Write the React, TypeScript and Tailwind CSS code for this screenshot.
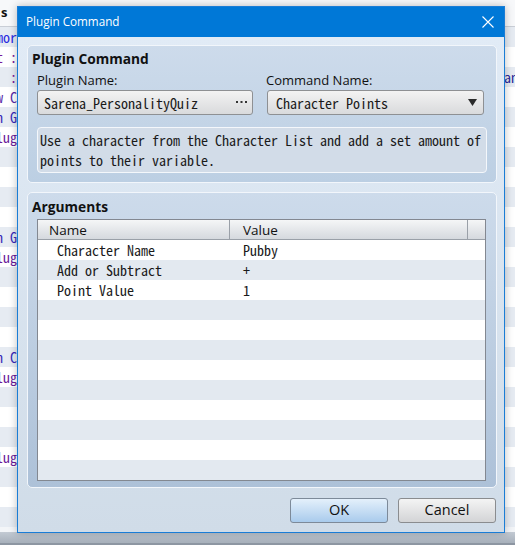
import React from "react";

const MONO = "font-['Noto_Sans_Mono_CJK_JP','DejaVu_Sans_Mono',monospace]";

const leftRows: { t: string; c: string }[] = [
  { t: "mor", c: "text-[#2a2ae0]" },
  { t: "t :", c: "text-[#7a1a9a]" },
  { t: " :", c: "text-[#7a1a9a]" },
  { t: "w C", c: "text-[#5a2aa8]" },
  { t: "n G", c: "text-[#3a2ab8]" },
  { t: "lug", c: "text-[#6a1a9a]" },
  { t: "", c: "" },
  { t: "", c: "" },
  { t: "", c: "" },
  { t: "", c: "" },
  { t: "n G", c: "text-[#3a2ab8]" },
  { t: "lug", c: "text-[#6a1a9a]" },
  { t: "", c: "" },
  { t: "", c: "" },
  { t: "", c: "" },
  { t: "", c: "" },
  { t: "n C", c: "text-[#3a2ab8]" },
  { t: "lug", c: "text-[#6a1a9a]" },
  { t: "", c: "" },
  { t: "", c: "" },
  { t: "", c: "" },
  { t: "lug", c: "text-[#6a1a9a]" },
  { t: "", c: "" },
  { t: "", c: "" },
  { t: "", c: "" },
];

const args = [
  { n: "Character Name", v: "Pubby" },
  { n: "Add or Subtract", v: "+" },
  { n: "Point Value", v: "1" },
];

export default function App() {
  const rows = Array.from({ length: 12 }, (_, i) => args[i] ?? { n: "", v: "" });
  return (
    <div className="relative w-[515px] h-[545px] overflow-hidden bg-[#f3f5f8] font-['Open_Sans',sans-serif]">
      {/* Underlying application */}
      <div className="flex flex-col h-full">
        <div className="h-[27px] flex items-center bg-[#f7f8fa] border-b border-[#c9ced6] shrink-0">
          <span className="pl-[1px] text-[13px] font-bold text-[#111]">s</span>
        </div>
        <div className="flex-1 overflow-hidden">
          {leftRows.map((r, i) => (
            <div
              key={i}
              className={`h-[20px] flex items-center justify-between ${i % 2 === 0 ? "bg-[#e6ebf2]" : "bg-white"}`}
            >
              <div className={`w-[17px] overflow-hidden whitespace-pre text-[14px] leading-[20px] ${MONO} ${r.c} flex justify-end`}>
                {r.t}
              </div>
              <div className={`w-[11px] overflow-hidden whitespace-pre text-[14px] leading-[20px] ${MONO} text-[#2a2a9a]`}>
                {i === 2 ? "an" : ""}
              </div>
            </div>
          ))}
        </div>
        <div className="h-[13px] shrink-0 bg-gradient-to-b from-[#c3cad3] to-[#a7b0bb] border-b-[2px] border-[#8d96a2]" />
      </div>

      {/* Dialog window */}
      <div className="absolute left-[17px] top-[6px] w-[488px] h-[527px] border border-[#1a7dd6] flex flex-col shadow-[0_0_8px_rgba(0,0,0,0.25)]">
        <div className="h-[30px] shrink-0 bg-[#0078d7] flex items-center justify-between pl-[8px] pr-[10px]">
          <span className="text-white text-[11.7px] leading-none">Plugin Command</span>
          <svg width="12" height="12" viewBox="0 0 12 12">
            <path d="M0.5 0.5 L11.5 11.5 M11.5 0.5 L0.5 11.5" stroke="#fff" strokeWidth="1.1" />
          </svg>
        </div>
        <div className="flex-1 flex flex-col bg-gradient-to-b from-[#e1ebf6] to-[#d0dce8] pl-[9px] pr-[7px] pt-[8px] pb-[8px]">
          {/* Group 1 */}
          <div className="h-[138px] shrink-0 rounded-[5px] border border-[#f2f6fb] bg-gradient-to-b from-[#cddbeb] to-[#bccfe3] pl-[4px] pr-[9px] pt-[4px]">
            <div className="h-[18px] leading-[18px] text-[13.75px] font-bold text-[#111]">Plugin Command</div>
            <div className="flex gap-[14px] pl-[5px]">
              <div className="w-[216px] flex flex-col">
                <div className="h-[20px] pt-[3px] leading-[18px] text-[13px] text-[#111]">Plugin Name:</div>
                <div className="mt-[2px] h-[25px] rounded-[3px] border border-[#8e9093] bg-gradient-to-b from-[#f3f3f3] to-[#d9dadc] flex items-center justify-between pl-[6px] pr-[5px]">
                  <span className={`${MONO} text-[14px] text-[#1a1a1a] leading-none`}>Sarena_PersonalityQuiz</span>
                  <svg width="11" height="3" viewBox="0 0 11 3">
                    <rect x="0" y="0" width="2" height="2" fill="#333" />
                    <rect x="4.5" y="0" width="2" height="2" fill="#333" />
                    <rect x="9" y="0" width="2" height="2" fill="#333" />
                  </svg>
                </div>
              </div>
              <div className="w-[217px] flex flex-col">
                <div className="h-[20px] pt-[3px] leading-[18px] text-[13px] text-[#111] -ml-[1px]">Command Name:</div>
                <div className="mt-[2px] h-[25px] rounded-[3px] border border-[#8e9093] bg-gradient-to-b from-[#f3f3f3] to-[#d9dadc] flex items-center justify-between pl-[8px] pr-[6px]">
                  <span className={`${MONO} text-[14px] text-[#1a1a1a] leading-none`}>Character Points</span>
                  <svg width="9" height="7" viewBox="0 0 9 7">
                    <path d="M0 0 L9 0 L4.5 7 Z" fill="#2b2b2b" />
                  </svg>
                </div>
              </div>
            </div>
            <div className="mt-[12px] ml-[5px] mr-[0px] h-[46px] rounded-[4px] border border-[#f4f7fb] bg-[#d2dce8] px-[2px] pt-[3px]">
              <p className={`${MONO} text-[14px] leading-[19.5px] text-[#1a1a1a]`}>
                Use a character from the Character List and add a set amount of points to their variable.
              </p>
            </div>
          </div>

          {/* Group 2 */}
          <div className="mt-[9px] h-[296px] shrink-0 rounded-[5px] border border-[#f2f6fb] bg-gradient-to-b from-[#cddbeb] to-[#adc1d8] pl-[4px] pr-[9px] pt-[5px]">
            <div className="h-[18px] leading-[18px] text-[13.75px] font-bold text-[#111]">Arguments</div>
            <div className="mt-[3px] ml-[5px] w-[449px] border border-[#838891] bg-white">
              <div className="h-[20px] flex bg-gradient-to-b from-[#f5f6f7] to-[#d5d9de] border-b border-[#9aa0a8]">
                <div className="w-[192px] border-r border-[#9aa0a8] pl-[11px] text-[13.5px] leading-[20px] text-[#111]">Name</div>
                <div className="w-[238px] border-r border-[#9aa0a8] pl-[13px] text-[13.5px] leading-[20px] text-[#111]">Value</div>
                <div className="flex-1" />
              </div>
              {rows.map((r, i) => (
                <div
                  key={i}
                  className={`h-[20px] flex ${MONO} text-[14px] leading-[20px] text-[#1a1a1a] ${i % 2 === 0 ? "bg-white" : "bg-[#e3e9f0]"}`}
                >
                  <div className="w-[193px] pl-[19px] whitespace-pre">{r.n}</div>
                  <div className="flex-1 pl-[12px] whitespace-pre">{r.v}</div>
                </div>
              ))}
            </div>
          </div>

          {/* Buttons */}
          <div className="mt-[10px] flex justify-end gap-[10px] pr-[1px]">
            <button className="w-[98px] h-[25px] rounded-[3px] border border-[#7d8a99] bg-gradient-to-b from-[#e4f0fb] to-[#a9cbec] text-[14.5px] text-[#111] leading-none">
              OK
            </button>
            <button className="w-[98px] h-[25px] rounded-[3px] border border-[#8a8c8f] bg-gradient-to-b from-[#f4f4f4] to-[#d3d4d6] text-[14.5px] text-[#111] leading-none">
              Cancel
            </button>
          </div>
        </div>
      </div>
    </div>
  );
}
